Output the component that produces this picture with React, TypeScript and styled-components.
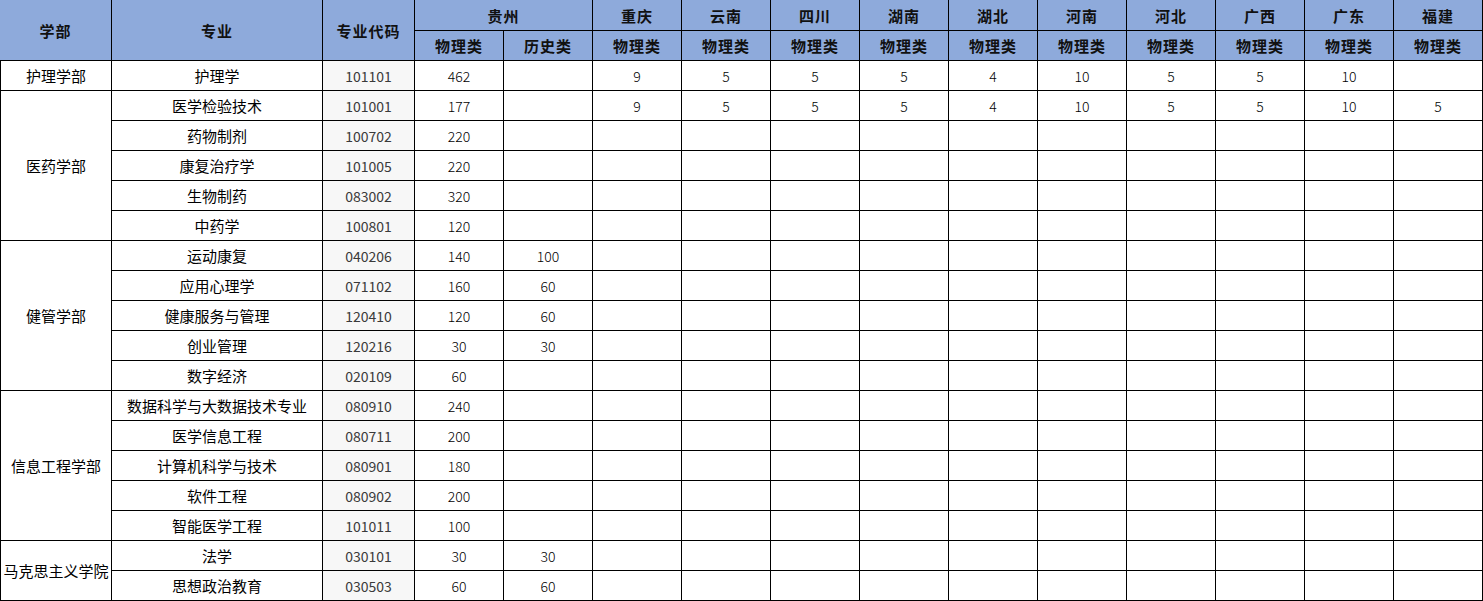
import React from "react";
import styled, { createGlobalStyle } from "styled-components";

const GlobalStyle = createGlobalStyle`
  html, body { margin: 0; padding: 0; background: #ffffff; }
  body { font-family: "Noto Sans CJK SC", "Noto Sans", sans-serif; }
`;

const Sheet = styled.div`
  display: grid;
  width: 1483px;
  box-sizing: border-box;
  grid-template-columns: 110px 210px 91px repeat(12, 88px);
  grid-template-rows: 30px 29px repeat(18, 29px);
  gap: 1px;
  padding: 0 1px 1px 1px;
  background: #000000;
`;

const HeadCell = styled.div<{ $rows?: number; $cols?: number; $first?: boolean }>`
  grid-row: span ${(p) => p.$rows ?? 1};
  grid-column: span ${(p) => p.$cols ?? 1};
  margin-left: ${(p) => (p.$first ? "-1px" : "0")};
  background: #8eaadb;
  color: #111111;
  font-size: 15px;
  font-weight: 700;
  display: flex;
  align-items: center;
  justify-content: center;
  letter-spacing: 1px;
  white-space: nowrap;
`;

const DeptCell = styled.div<{ $rows: number }>`
  grid-row: span ${(p) => p.$rows};
  background: #ffffff;
  color: #000000;
  font-size: 15px;
  display: flex;
  align-items: center;
  justify-content: center;
  white-space: nowrap;
`;

const Cell = styled.div<{ $code?: boolean; $num?: boolean }>`
  background: ${(p) => (p.$code ? "#f7f7f7" : "#ffffff")};
  color: ${(p) => (p.$code ? "#3a3a3a" : "#000000")};
  font-size: ${(p) => (p.$code || p.$num ? "14px" : "15px")};
  font-weight: ${(p) => (p.$num ? 300 : 400)};
  display: flex;
  align-items: center;
  justify-content: center;
  white-space: nowrap;
`;

const provinces = ["重庆", "云南", "四川", "湖南", "湖北", "河南", "河北", "广西", "广东", "福建"];

type Row = { major: string; code: string; vals: string[] };
type Dept = { name: string; rows: Row[] };

const blank = (n: number) => Array.from({ length: n }, () => "");

const depts: Dept[] = [
  {
    name: "护理学部",
    rows: [{ major: "护理学", code: "101101", vals: ["462", "", "9", "5", "5", "5", "4", "10", "5", "5", "10", ""] }],
  },
  {
    name: "医药学部",
    rows: [
      { major: "医学检验技术", code: "101001", vals: ["177", "", "9", "5", "5", "5", "4", "10", "5", "5", "10", "5"] },
      { major: "药物制剂", code: "100702", vals: ["220", ...blank(11)] },
      { major: "康复治疗学", code: "101005", vals: ["220", ...blank(11)] },
      { major: "生物制药", code: "083002", vals: ["320", ...blank(11)] },
      { major: "中药学", code: "100801", vals: ["120", ...blank(11)] },
    ],
  },
  {
    name: "健管学部",
    rows: [
      { major: "运动康复", code: "040206", vals: ["140", "100", ...blank(10)] },
      { major: "应用心理学", code: "071102", vals: ["160", "60", ...blank(10)] },
      { major: "健康服务与管理", code: "120410", vals: ["120", "60", ...blank(10)] },
      { major: "创业管理", code: "120216", vals: ["30", "30", ...blank(10)] },
      { major: "数字经济", code: "020109", vals: ["60", ...blank(11)] },
    ],
  },
  {
    name: "信息工程学部",
    rows: [
      { major: "数据科学与大数据技术专业", code: "080910", vals: ["240", ...blank(11)] },
      { major: "医学信息工程", code: "080711", vals: ["200", ...blank(11)] },
      { major: "计算机科学与技术", code: "080901", vals: ["180", ...blank(11)] },
      { major: "软件工程", code: "080902", vals: ["200", ...blank(11)] },
      { major: "智能医学工程", code: "101011", vals: ["100", ...blank(11)] },
    ],
  },
  {
    name: "马克思主义学院",
    rows: [
      { major: "法学", code: "030101", vals: ["30", "30", ...blank(10)] },
      { major: "思想政治教育", code: "030503", vals: ["60", "60", ...blank(10)] },
    ],
  },
];

export default function App() {
  return (
    <>
      <GlobalStyle />
      <Sheet>
        <HeadCell $rows={2} $first>学部</HeadCell>
        <HeadCell $rows={2}>专业</HeadCell>
        <HeadCell $rows={2}>专业代码</HeadCell>
        <HeadCell $cols={2}>贵州</HeadCell>
        {provinces.map((p) => (
          <HeadCell key={p}>{p}</HeadCell>
        ))}
        <HeadCell>物理类</HeadCell>
        <HeadCell>历史类</HeadCell>
        {provinces.map((p) => (
          <HeadCell key={p + "-t"}>物理类</HeadCell>
        ))}
        {depts.map((d) => (
          <React.Fragment key={d.name}>
            <DeptCell $rows={d.rows.length}>{d.name}</DeptCell>
            {d.rows.map((r) => (
              <React.Fragment key={r.code}>
                <Cell>{r.major}</Cell>
                <Cell $code>{r.code}</Cell>
                {r.vals.map((v, i) => (
                  <Cell key={i} $num>
                    {v}
                  </Cell>
                ))}
              </React.Fragment>
            ))}
          </React.Fragment>
        ))}
      </Sheet>
    </>
  );
}
